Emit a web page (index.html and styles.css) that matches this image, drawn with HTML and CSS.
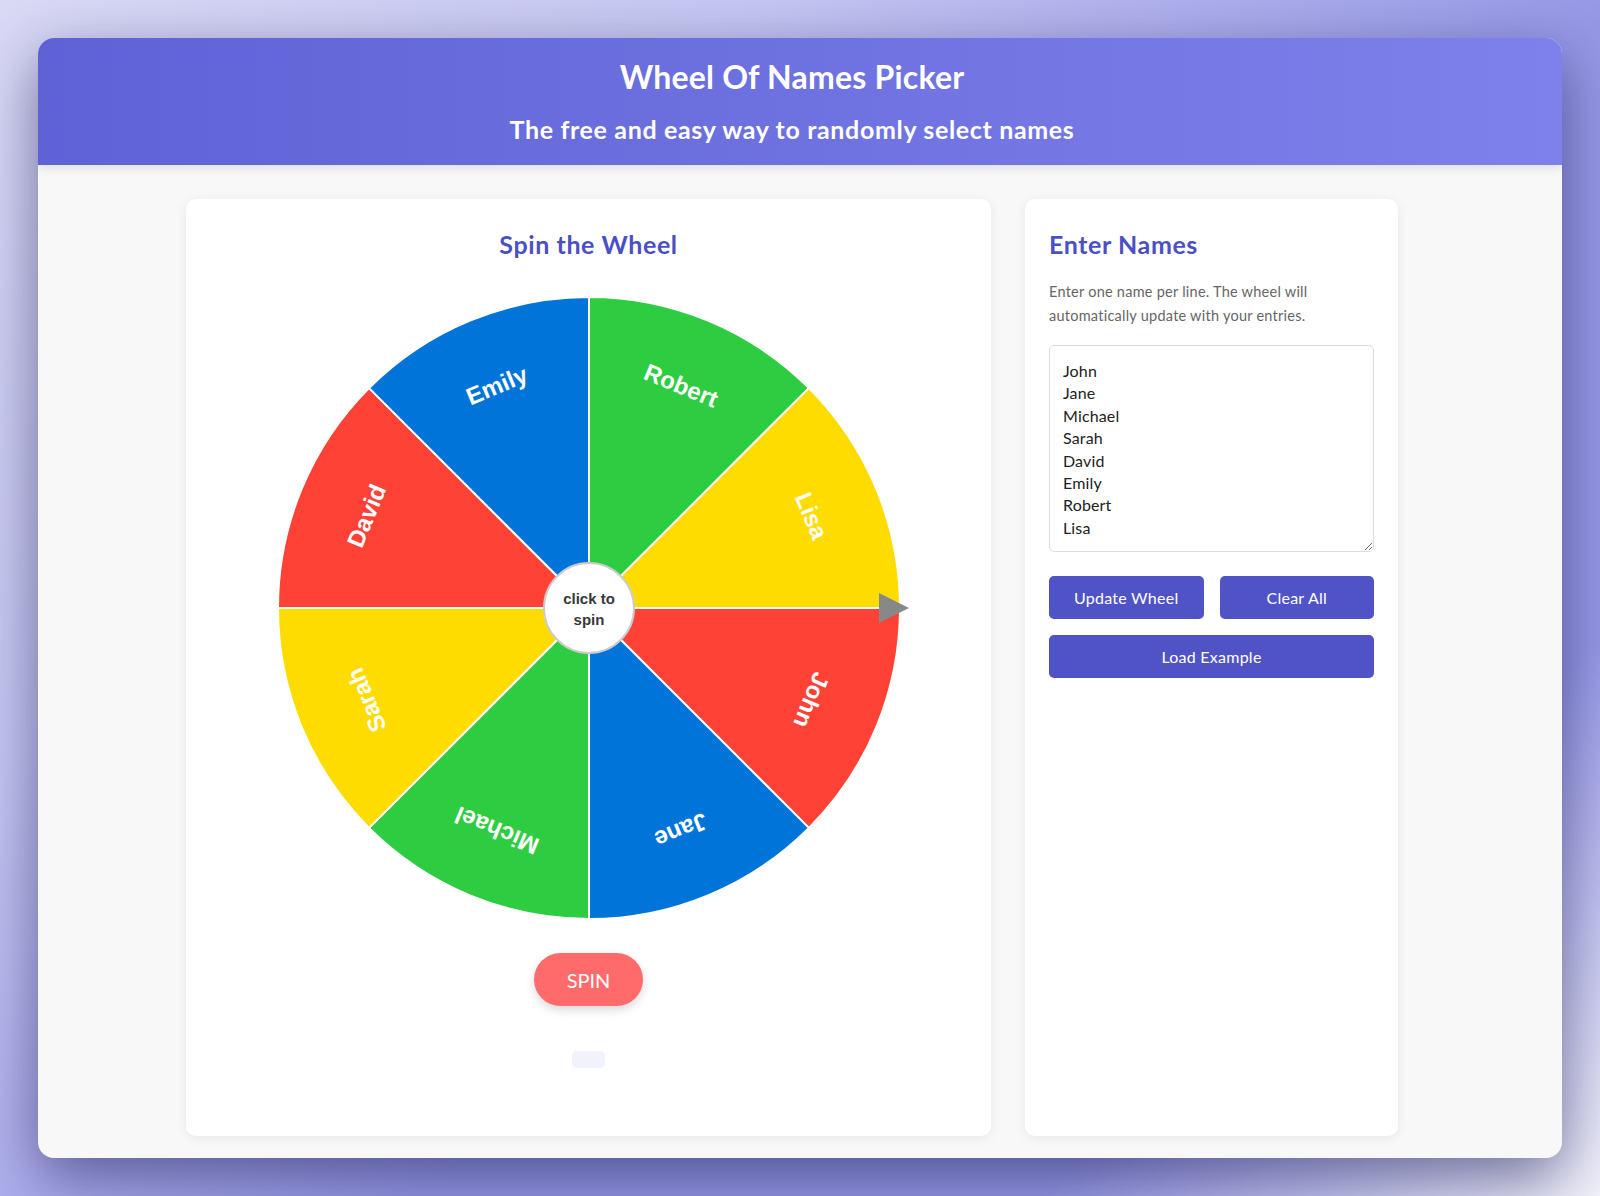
FILE: index.html
```html
<!DOCTYPE html>
<html lang="en">
<head>
<meta charset="utf-8">
<title>Wheel Of Names Picker</title>
<link rel="stylesheet" href="styles.css">
</head>
<body>
<div class="app">
  <header class="hero">
    <h1 class="hero-title">Wheel Of Names Picker</h1>
    <p class="hero-sub">The free and easy way to randomly select names</p>
  </header>
  <main class="main">
    <section class="panel wheel-panel">
      <h2 class="panel-title">Spin the Wheel</h2>
      <svg class="wheel" width="640" height="640" viewBox="0 0 640 640">
        <g class="slices">
          <path class="red" d="M320 320 L631 320 A311 311 0 0 1 539.9 539.9 Z"/>
          <path class="blue" d="M320 320 L539.9 539.9 A311 311 0 0 1 320 631 Z"/>
          <path class="green" d="M320 320 L320 631 A311 311 0 0 1 100.1 539.9 Z"/>
          <path class="yellow" d="M320 320 L100.1 539.9 A311 311 0 0 1 9 320 Z"/>
          <path class="red" d="M320 320 L9 320 A311 311 0 0 1 100.1 100.1 Z"/>
          <path class="blue" d="M320 320 L100.1 100.1 A311 311 0 0 1 320 9 Z"/>
          <path class="green" d="M320 320 L320 9 A311 311 0 0 1 539.9 100.1 Z"/>
          <path class="yellow" d="M320 320 L539.9 100.1 A311 311 0 0 1 631 320 Z"/>
        </g>
        <g transform="translate(320 320)">
          <text class="slice-label" transform="rotate(112.5) translate(0 -241)">John</text>
          <text class="slice-label" transform="rotate(157.5) translate(0 -241)">Jane</text>
          <text class="slice-label" transform="rotate(202.5) translate(0 -241)">Michael</text>
          <text class="slice-label" transform="rotate(247.5) translate(0 -241)">Sarah</text>
          <text class="slice-label" transform="rotate(292.5) translate(0 -241)">David</text>
          <text class="slice-label" transform="rotate(337.5) translate(0 -241)">Emily</text>
          <text class="slice-label" transform="rotate(22.5) translate(0 -241)">Robert</text>
          <text class="slice-label" transform="rotate(67.5) translate(0 -241)">Lisa</text>
          <circle class="hub" r="45"/>
          <text class="hub-label" y="-10">click to</text>
          <text class="hub-label" y="11">spin</text>
        </g>
        <polygon class="pointer" points="610,305 640,320 610,335"/>
      </svg>
      <button class="spin-btn">SPIN</button>
      <div class="result"></div>
    </section>
    <section class="panel names-panel">
      <h2 class="panel-title">Enter Names</h2>
      <p class="hint">Enter one name per line. The wheel will automatically update with your entries.</p>
      <textarea class="names">John
Jane
Michael
Sarah
David
Emily
Robert
Lisa</textarea>
      <div class="btn-row">
        <button class="btn">Update Wheel</button>
        <button class="btn">Clear All</button>
      </div>
      <button class="btn btn-wide">Load Example</button>
    </section>
  </main>
</div>
</body>
</html>
```
FILE: styles.css
```css
* { box-sizing: border-box; }
html, body { margin: 0; }
body {
  padding: 38px;
  min-height: 1196px;
  font-family: "Lato", "Open Sans", sans-serif;
  background: linear-gradient(135deg, #dadaf6 0%, #c5c6f2 28%, #9698e7 58%, #9698e7 80%, #f3f3fa 100%);
}
.app {
  background: #f8f8f8;
  border-radius: 16px;
  overflow: hidden;
  box-shadow: 0 20px 60px rgba(25, 25, 80, 0.55);
}
.hero {
  position: relative;
  z-index: 1;
  height: 127px;
  padding: 20px 16px 0 0;
  background: linear-gradient(90deg, #5e62d5, #7e81eb);
  color: #fff;
  text-align: center;
  box-shadow: 0 2px 10px rgba(0, 0, 0, 0.12);
}
.hero-title {
  margin: 0;
  font-size: 32px;
  line-height: 38px;
  font-weight: 700;
  letter-spacing: 0.2px;
}
.hero-sub {
  margin: 19px 0 0;
  font-size: 25px;
  line-height: 29px;
  font-weight: 700;
  letter-spacing: 0.65px;
}
.main {
  display: flex;
  justify-content: center;
  align-items: stretch;
  gap: 34px;
  padding: 34px 16px 22px 0;
}
.panel {
  background: #fff;
  border-radius: 10px;
  box-shadow: 0 2px 12px rgba(0, 0, 0, 0.07);
  padding: 24px;
}
.wheel-panel {
  width: 805px;
  display: flex;
  flex-direction: column;
  align-items: center;
}
.names-panel { width: 373px; }
.panel-title {
  margin: 7px 0 0;
  font-size: 25px;
  line-height: 29px;
  font-weight: 700;
  letter-spacing: 0.6px;
  color: #4b4fc5;
}
.wheel { display: block; margin-top: 29px; }
.slices path { stroke: #fff; stroke-width: 2; }
.red { fill: #ff4136; }
.blue { fill: #0074d9; }
.green { fill: #2ecc40; }
.yellow { fill: #ffdc00; }
.slice-label {
  font-family: "Liberation Sans", Arial, sans-serif;
  font-weight: 700;
  font-size: 24px;
  fill: #fff;
  text-anchor: middle;
  dominant-baseline: central;
}
.hub { fill: #fff; stroke: #cccccc; stroke-width: 2; }
.hub-label {
  font-family: "Liberation Sans", Arial, sans-serif;
  font-weight: 700;
  font-size: 15px;
  fill: #383838;
  text-anchor: middle;
  dominant-baseline: central;
}
.pointer { fill: #888; }
.spin-btn {
  margin-top: 25px;
  width: 109px;
  height: 53px;
  border: none;
  border-radius: 27px;
  background: #ff6b6b;
  color: #fff;
  font-family: "Lato", "Open Sans", sans-serif;
  font-size: 20px;
  box-shadow: 0 4px 10px rgba(0, 0, 0, 0.15);
}
.result {
  margin: 45px 0 44px;
  width: 33px;
  height: 17px;
  border-radius: 5px;
  background: #f2f2fd;
}
.hint {
  margin: 21px 0 17px;
  font-size: 14.5px;
  line-height: 24px;
  letter-spacing: 0.25px;
  color: #666;
}
.names {
  display: block;
  width: 100%;
  height: 207px;
  padding: 14px 13px 12px;
  border: 1px solid #ddd;
  border-radius: 5px;
  font-family: "Lato", "Open Sans", sans-serif;
  font-size: 16px;
  line-height: 22.4px;
  letter-spacing: 0.15px;
  color: #222;
  resize: vertical;
}
.btn-row {
  display: grid;
  grid-template-columns: 1fr 1fr;
  gap: 16px;
  margin-top: 24px;
}
.btn {
  height: 43px;
  border: none;
  border-radius: 5px;
  background: #5053c6;
  color: #fff;
  font-family: "Lato", "Open Sans", sans-serif;
  font-size: 16px;
  letter-spacing: 0.25px;
}
.btn-wide {
  display: block;
  width: 100%;
  margin-top: 16px;
}
```
